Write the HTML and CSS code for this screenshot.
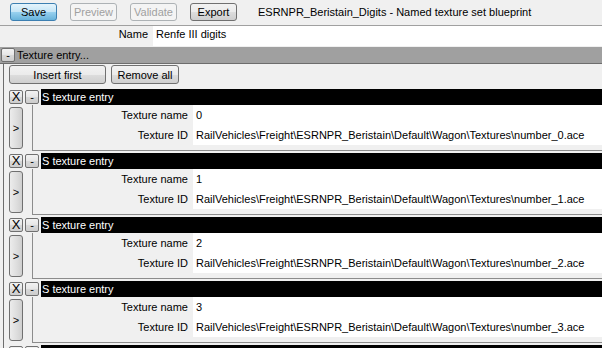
FILE: index.html
```html
<!DOCTYPE html>
<html lang="en">
<head>
    <meta charset="UTF-8">
    <title>Named texture set blueprint</title>
    <link rel="stylesheet" href="styles.css">
</head>
<body>
    <div class="toolbar">
        <button class="tool-button default">Save</button>
        <button class="tool-button" disabled>Preview</button>
        <button class="tool-button" disabled>Validate</button>
        <button class="tool-button">Export</button>
        <span class="blueprint-title">ESRNPR_Beristain_Digits - Named texture set blueprint</span>
    </div>

    <div class="field-row name-row">
        <div class="field-label">Name</div>
        <div class="field-value">Renfe III digits</div>
    </div>

    <div class="group-header">
        <button class="mini-button">-</button>
        <span>Texture entry...</span>
    </div>

    <div class="group-body">
        <div class="group-actions">
            <button class="tool-button insert">Insert first</button>
            <button class="tool-button remove">Remove all</button>
        </div>

        <!-- texture entries -->
        <div class="entry">
            <div class="entry-header">
                <button class="mini-button cross">X</button>
                <button class="mini-button">-</button>
                <div class="entry-title">S texture entry</div>
            </div>
            <div class="entry-body">
                <button class="side-button">&gt;</button>
                <div class="entry-fields">
                    <div class="field-row"><div class="field-label">Texture name</div><div class="field-value">0</div></div>
                    <div class="field-row"><div class="field-label">Texture ID</div><div class="field-value">RailVehicles\Freight\ESRNPR_Beristain\Default\Wagon\Textures\number_0.ace</div></div>
                </div>
            </div>
        </div>

        <div class="entry">
            <div class="entry-header">
                <button class="mini-button cross">X</button>
                <button class="mini-button">-</button>
                <div class="entry-title">S texture entry</div>
            </div>
            <div class="entry-body">
                <button class="side-button">&gt;</button>
                <div class="entry-fields">
                    <div class="field-row"><div class="field-label">Texture name</div><div class="field-value">1</div></div>
                    <div class="field-row"><div class="field-label">Texture ID</div><div class="field-value">RailVehicles\Freight\ESRNPR_Beristain\Default\Wagon\Textures\number_1.ace</div></div>
                </div>
            </div>
        </div>

        <div class="entry">
            <div class="entry-header">
                <button class="mini-button cross">X</button>
                <button class="mini-button">-</button>
                <div class="entry-title">S texture entry</div>
            </div>
            <div class="entry-body">
                <button class="side-button">&gt;</button>
                <div class="entry-fields">
                    <div class="field-row"><div class="field-label">Texture name</div><div class="field-value">2</div></div>
                    <div class="field-row"><div class="field-label">Texture ID</div><div class="field-value">RailVehicles\Freight\ESRNPR_Beristain\Default\Wagon\Textures\number_2.ace</div></div>
                </div>
            </div>
        </div>

        <div class="entry">
            <div class="entry-header">
                <button class="mini-button cross">X</button>
                <button class="mini-button">-</button>
                <div class="entry-title">S texture entry</div>
            </div>
            <div class="entry-body">
                <button class="side-button">&gt;</button>
                <div class="entry-fields">
                    <div class="field-row"><div class="field-label">Texture name</div><div class="field-value">3</div></div>
                    <div class="field-row"><div class="field-label">Texture ID</div><div class="field-value">RailVehicles\Freight\ESRNPR_Beristain\Default\Wagon\Textures\number_3.ace</div></div>
                </div>
            </div>
        </div>

        <div class="entry">
            <div class="entry-header">
                <button class="mini-button cross">X</button>
                <button class="mini-button">-</button>
                <div class="entry-title">S texture entry</div>
            </div>
        </div>
    </div>
</body>
</html>
```

FILE: styles.css
```css
/* General styling */
body {
    margin: 0;
    background-color: #f0f0f0;
    font-family: "Liberation Sans", Arial, sans-serif;
    font-size: 11px;
    color: #000;
    overflow: hidden;
}

button {
    font-family: inherit;
    font-size: 11px;
    color: #000;
    padding: 0;
    white-space: nowrap;
}

/* Top toolbar */
.toolbar {
    display: flex;
    align-items: center;
    gap: 13px;
    height: 26px;
    padding-left: 10px;
    padding-bottom: 1px;
    border-bottom: 1px solid #a0a0a0;
    box-sizing: border-box;
}

.tool-button {
    height: 18px;
    background: linear-gradient(#f2f2f2, #ebebeb 50%, #dddddd 51%, #cfcfcf);
    border: 1px solid #707070;
    border-radius: 3px;
}

.toolbar .tool-button {
    width: 47px;
}

.tool-button.default {
    background: linear-gradient(#e5f4fc, #c4e5f6 50%, #98d1ef 51%, #68b3db);
    border-color: #3c7fb1;
}

.tool-button:disabled {
    background: #f4f4f4;
    border-color: #adb2b5;
    color: #a0a0a0;
}

.blueprint-title {
    margin-left: 8px;
}

/* Label / value rows */
.field-row {
    display: flex;
    align-items: center;
    height: 17px;
}

.field-label {
    width: 148px;
    text-align: right;
    padding-right: 5px;
    box-sizing: border-box;
}

.field-value {
    flex: 1;
    align-self: stretch;
    display: flex;
    align-items: center;
    background-color: #fff;
    padding-left: 3px;
    white-space: nowrap;
}

.name-row {
    height: 20px;
    margin-bottom: 1px;
}

.name-row .field-label {
    width: 153px;
    padding-bottom: 5px;
}

.name-row .field-value {
    padding-bottom: 5px;
}

/* Collapsible group */
.group-header {
    display: flex;
    align-items: center;
    gap: 2px;
    height: 16px;
    padding-left: 1px;
    background-color: #a0a0a0;
    border-bottom: 1px solid #6d6d6d;
}

.mini-button {
    width: 14px;
    height: 14px;
    line-height: 11px;
    background: linear-gradient(#f2f2f2, #e6e6e6 50%, #d8d8d8 51%, #cdcdcd);
    border: 1px solid #707070;
    border-radius: 2px;
    font-size: 11px;
}

.mini-button.cross {
    font-size: 13px;
    line-height: 12px;
}

.group-body {
    margin-left: 3px;
    border-left: 1px solid #6d6d6d;
    padding-left: 5px;
}

.group-actions {
    display: flex;
    gap: 5px;
    padding-top: 1px;
    height: 25px;
    box-sizing: border-box;
}

.group-actions .tool-button {
    height: 19px;
}

.tool-button.insert {
    width: 97px;
}

.tool-button.remove {
    width: 68px;
}

/* Texture entries */
.entry {
    margin-bottom: 2px;
}

.entry-header {
    display: flex;
    align-items: center;
    gap: 2px;
    height: 16px;
}

.entry-title {
    flex: 1;
    align-self: stretch;
    background-color: #000;
    color: #fff;
    padding-left: 1px;
    display: flex;
    align-items: center;
}

.entry-body {
    display: flex;
}

.side-button {
    width: 14px;
    height: 42px;
    margin-top: 2px;
    background: linear-gradient(90deg, #ececec, #dcdcdc 60%, #cfcfcf);
    border: 1px solid #707070;
    border-radius: 3px;
    font-size: 11px;
}

.entry-fields {
    flex: 1;
    margin-left: 9px;
    border-left: 1px solid #8c8c8c;
    border-bottom: 1px solid #8c8c8c;
    padding-bottom: 5px;
}

.entry-fields .field-row {
    height: 21px;
}

.entry-fields .field-row:first-child {
    height: 19px;
}

.entry-fields .field-label {
    width: 160px;
}
```
